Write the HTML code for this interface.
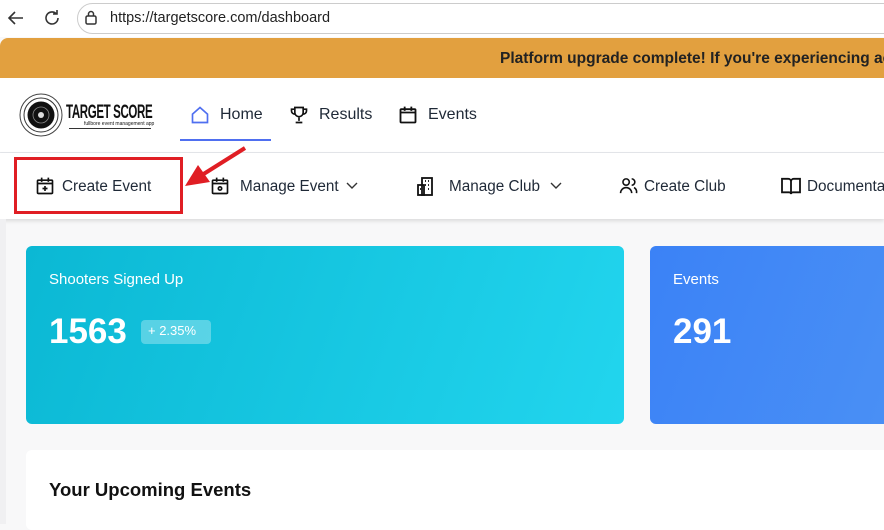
<!DOCTYPE html>
<html><head><style>
*{margin:0;padding:0;box-sizing:border-box}
body{width:884px;height:524px;overflow:hidden;background:#f8f8f9;font-family:"Liberation Sans",sans-serif;position:relative;color:#1f2937}
.abs{position:absolute}
.t{position:absolute;white-space:nowrap}
</style></head><body>
<div class="abs" style="left:0;top:0;width:884px;height:37px;background:#fff"></div>
<svg class="abs" style="left:6px;top:8px" width="20" height="20" viewBox="0 0 20 20" fill="none" stroke="#333" stroke-width="1.6"><path d="M17 10H3M9 4L3 10l6 6"/></svg>
<svg class="abs" style="left:42px;top:8px" width="20" height="20" viewBox="0 0 20 20" fill="none" stroke="#333" stroke-width="1.6"><path d="M16 10a6 6 0 1 1-2-4.5M15 2v4h-4"/></svg>
<div class="abs" style="left:77px;top:3px;width:830px;height:31px;border:1px solid #ccc;border-radius:16px;background:#fff"></div>
<svg class="abs" style="left:84px;top:10px" width="14" height="16" viewBox="0 0 14 16" fill="none" stroke="#333" stroke-width="1.5"><rect x="2" y="6" width="10" height="8" rx="1.5"/><path d="M4.5 6V4a2.5 2.5 0 0 1 5 0v2"/></svg>
<div class="t" style="left:110px;top:10px;font-size:14.5px;color:#222">https://targetscore.com/dashboard</div>
<div class="abs" style="left:0;top:38px;width:884px;height:40px;background:#e2a03f;border-top-left-radius:8px"></div>
<div class="t" style="left:500px;top:50px;font-size:15.5px;font-weight:bold;color:#222">Platform upgrade complete! If you're experiencing acc</div>
<div class="abs" style="left:0;top:78px;width:884px;height:75px;background:#fff;border-bottom:1px solid #e5e7eb"></div>
<svg class="abs" style="left:19px;top:92px" width="44" height="46" viewBox="0 0 44 46"><circle cx="22" cy="23" r="21" fill="#fff" stroke="#444" stroke-width="1"/><circle cx="22" cy="23" r="17" fill="#fff" stroke="#333" stroke-width="1"/><circle cx="22" cy="23" r="13.5" fill="#111"/><circle cx="22" cy="23" r="8" fill="none" stroke="#888" stroke-width=".8"/><circle cx="22" cy="23" r="3" fill="#ddd"/></svg>
<div class="t" style="left:66px;top:101px;font-size:15px;font-weight:bold;letter-spacing:-0.5px;color:#111;transform:scale(0.77,1.3);transform-origin:left top">TARGET SCORE</div>
<div class="t" style="left:84px;top:121px;font-size:5px;color:#111">fullbore event management app</div>
<div class="abs" style="left:69px;top:128px;width:82px;height:1px;background:#333"></div>
<svg class="abs" style="left:190px;top:105px" width="20" height="20" viewBox="0 0 24 24" fill="none" stroke="#4f6ff0" stroke-width="2"><path d="M3 11L12 3l9 8v10H3z"/></svg>
<div class="t" style="left:220px;top:106px;font-size:16px">Home</div>
<div class="abs" style="left:180px;top:139px;width:91px;height:2px;background:#4f6ff0"></div>
<svg class="abs" style="left:289px;top:105px" width="20" height="20" viewBox="0 0 24 24" fill="none" stroke="#111" stroke-width="2"><path d="M7 3h10v6a5 5 0 0 1-10 0zM7 5H3v2a4 4 0 0 0 4 4M17 5h4v2a4 4 0 0 1-4 4M12 14v5M8 21h8"/></svg>
<div class="t" style="left:319px;top:106px;font-size:16px">Results</div>
<svg class="abs" style="left:398px;top:105px" width="20" height="20" viewBox="0 0 24 24" fill="none" stroke="#111" stroke-width="2.2"><rect x="3" y="5" width="18" height="16" rx="1"/><path d="M3 9h18M8 2v5M16 2v5"/></svg>
<div class="t" style="left:428px;top:106px;font-size:16px">Events</div>
<div class="abs" style="left:0;top:153px;width:884px;height:66px;background:#fff;box-shadow:0 2px 4px rgba(0,0,0,.12)"></div>
<svg class="abs" style="left:35px;top:176px" width="20" height="20" viewBox="0 0 24 24" fill="none" stroke="#111" stroke-width="2"><rect x="3" y="5" width="18" height="16" rx="1"/><path d="M3 9h18M8 2v5M16 2v5M12 12v6M9 15h6"/></svg>
<div class="t" style="left:62px;top:178px;font-size:15.3px">Create Event</div>
<div class="abs" style="left:14px;top:157px;width:169px;height:57px;border:3px solid #e01e24"></div>
<svg class="abs" style="left:180px;top:140px" width="70" height="55" viewBox="0 0 70 55"><path d="M65 8L22 35" stroke="#e01e24" stroke-width="4"/><path d="M5 46L18 25L30 42z" fill="#e01e24"/></svg>
<svg class="abs" style="left:210px;top:176px" width="20" height="20" viewBox="0 0 24 24" fill="none" stroke="#111" stroke-width="2"><rect x="3" y="5" width="18" height="16" rx="1"/><path d="M3 9h18M8 2v5M16 2v5"/><circle cx="12" cy="15" r="2"/></svg>
<div class="t" style="left:240px;top:178px;font-size:15.3px">Manage Event</div>
<svg class="abs" style="left:346px;top:182px" width="12" height="8" viewBox="0 0 12 8" fill="none" stroke="#333" stroke-width="1.4"><path d="M1 1l5 5 5-5"/></svg>
<svg class="abs" style="left:416px;top:176px" width="18" height="20" viewBox="0 0 18 20" fill="none" stroke="#111" stroke-width="1.8"><rect x="6" y="2" width="10" height="17"/><rect x="2" y="9" width="6" height="10"/><path d="M9 5h1M12 5h1M9 9h1M12 9h1M12 13h1M4 13h1"/></svg>
<div class="t" style="left:449px;top:178px;font-size:15.3px">Manage Club</div>
<svg class="abs" style="left:550px;top:182px" width="12" height="8" viewBox="0 0 12 8" fill="none" stroke="#333" stroke-width="1.4"><path d="M1 1l5 5 5-5"/></svg>
<svg class="abs" style="left:619px;top:177px" width="19" height="18" viewBox="0 0 24 22" fill="none" stroke="#111" stroke-width="2"><circle cx="9" cy="6" r="4"/><path d="M2 20a7 7 0 0 1 14 0M16 2a4 4 0 0 1 0 8M19 13a6 6 0 0 1 3 7"/></svg>
<div class="t" style="left:644px;top:178px;font-size:15.3px">Create Club</div>
<svg class="abs" style="left:781px;top:177px" width="20" height="18" viewBox="0 0 22 20" fill="none" stroke="#111" stroke-width="2"><path d="M1 2h7a3 3 0 0 1 3 3v14a2 2 0 0 0-2-2H1zM21 2h-7a3 3 0 0 0-3 3v14a2 2 0 0 1 2-2h8z"/></svg>
<div class="t" style="left:807px;top:178px;font-size:15.3px">Documenta</div>
<div class="abs" style="left:0;top:219px;width:6px;height:305px;background:#f0f0f2"></div>
<div class="abs" style="left:26px;top:246px;width:598px;height:178px;border-radius:6px;background:linear-gradient(110deg,#0bb8d4,#22d5ee)"></div>
<div class="t" style="left:49px;top:271px;font-size:15px;color:#fff">Shooters Signed Up</div>
<div class="t" style="left:49px;top:312px;font-size:35px;color:#fff;font-weight:bold">1563</div>
<div class="abs" style="left:141px;top:320px;width:70px;height:24px;border-radius:4px;background:rgba(255,255,255,.3)"></div>
<div class="t" style="left:148px;top:323px;font-size:13px;color:#fff">+ 2.35%</div>
<div class="abs" style="left:650px;top:246px;width:250px;height:178px;border-radius:6px;background:linear-gradient(110deg,#3b82f6,#4a90f5)"></div>
<div class="t" style="left:673px;top:271px;font-size:15px;color:#fff">Events</div>
<div class="t" style="left:673px;top:312px;font-size:35px;color:#fff;font-weight:bold">291</div>
<div class="abs" style="left:26px;top:450px;width:870px;height:80px;border-radius:6px;background:#fff"></div>
<div class="t" style="left:49px;top:479px;font-size:18.5px;color:#111;font-weight:bold">Your Upcoming Events</div>
</body></html>
